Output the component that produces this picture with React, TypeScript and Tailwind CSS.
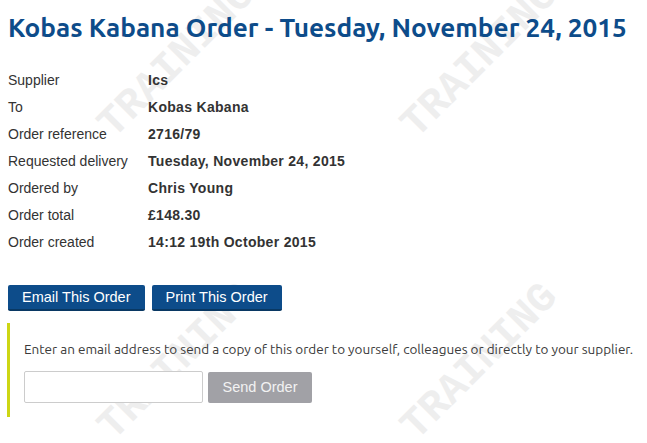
import React from "react";

const rows: [string, string][] = [
  ["Supplier", "Ics"],
  ["To", "Kobas Kabana"],
  ["Order reference", "2716/79"],
  ["Requested delivery", "Tuesday, November 24, 2015"],
  ["Ordered by", "Chris Young"],
  ["Order total", "£148.30"],
  ["Order created", "14:12 19th October 2015"],
];

const marks = [
  { left: 177, top: 60 },
  { left: 480, top: 60 },
  { left: 177, top: 362 },
  { left: 480, top: 362 },
];

export default function App() {
  return (
    <div className="relative w-[647px] h-[443px] overflow-hidden bg-white">
      <div className="absolute inset-0 pointer-events-none">
        {marks.map((m, i) => (
          <div
            key={i}
            className="absolute w-0 h-0"
            style={{ left: m.left, top: m.top }}
          >
            <span className="absolute left-0 top-0 -translate-x-1/2 -translate-y-1/2 -rotate-45 whitespace-nowrap font-bold text-[42px] leading-none text-[#eeeeee] font-['Liberation_Mono',monospace]">
              TRAINING
            </span>
          </div>
        ))}
      </div>
      <div className="relative px-2 font-['Liberation_Sans',Arial,sans-serif] text-[14px] text-[#333]">
        <h1 className="pt-[10px] h-[67px] text-[26.2px] leading-[36px] font-bold whitespace-nowrap text-[#0d4c8a] font-['Ubuntu','Lato',sans-serif]">
          Kobas Kabana Order - Tuesday, November 24, 2015
        </h1>
        <div className="flex flex-col">
          {rows.map(([k, v]) => (
            <div key={k} className="flex h-[27px] items-center">
              <div className="w-[140px]">{k}</div>
              <div className="font-bold tracking-[0.3px]">{v}</div>
            </div>
          ))}
        </div>
        <div className="flex gap-[7px] mt-[29px]">
          <button className="h-[26px] px-[14px] bg-[#0d4c8a] border-b-2 border-[#093863] rounded-[2px] text-white text-[14.5px] leading-none">
            Email This Order
          </button>
          <button className="h-[26px] px-[14px] bg-[#0d4c8a] border-b-2 border-[#093863] rounded-[2px] text-white text-[14.5px] leading-none">
            Print This Order
          </button>
        </div>
        <div className="mt-[12px] ml-[-1px] border-l-[3px] border-[#cdd614] pl-[14px] pt-[17px] pb-[14px]">
          <p className="font-['Ubuntu','Open_Sans',sans-serif] text-[13.5px] text-[#3a3a3a] leading-[18px] whitespace-nowrap">
            Enter an email address to send a copy of this order to yourself, colleagues or directly to your supplier.
          </p>
          <div className="flex gap-[5px] mt-[13px] items-start">
            <input className="w-[179px] h-[32px] border border-[#ccc] rounded-[2px] bg-white" />
            <button className="h-[31px] mt-[1px] w-[104px] bg-[#a1a1a6] rounded-[2px] text-[#f2f2f2] text-[14.5px]">
              Send Order
            </button>
          </div>
        </div>
      </div>
    </div>
  );
}
